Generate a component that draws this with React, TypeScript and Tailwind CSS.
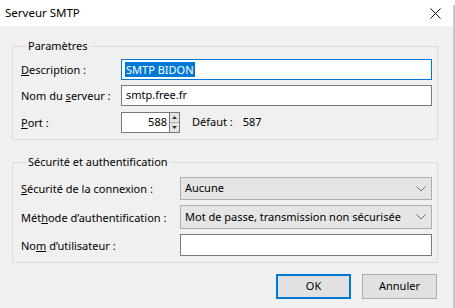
import React from 'react'

const font = { fontFamily: '"Noto Sans", "Open Sans", sans-serif' }

const Chevron = () => (
  <svg width="10" height="6" viewBox="0 0 10 6" className="shrink-0">
    <polyline points="0.5,0.5 5,5 9.5,0.5" fill="none" stroke="#6d6d6d" strokeWidth="1" />
  </svg>
)

const Label = ({ children, w }: { children: React.ReactNode; w: string }) => (
  <div className={`${w} shrink-0 whitespace-nowrap text-[11px] leading-none text-black`}>{children}</div>
)

const App = () => {
  return (
    <div className="flex w-[455px] h-[308px] bg-white" style={font}>
      <div className="flex flex-col w-[453px] h-full bg-[#f0f0f0]">
        {/* title bar */}
        <div className="flex items-center justify-between h-[26px] bg-white pl-[5px] pr-[12px]">
          <span className="text-[11.5px] text-black">Serveur SMTP</span>
          <svg width="11" height="11" viewBox="0 0 11 11">
            <path d="M0.5 0.5 L10.5 10.5 M10.5 0.5 L0.5 10.5" stroke="#111" strokeWidth="1" />
          </svg>
        </div>

        <div className="flex flex-col pl-[12px] pr-[15px] pt-[12px]">
          {/* Paramètres */}
          <fieldset className="border border-[#dcdcdc] pl-[8px] pr-[5px] pt-[5px] pb-[6px]">
            <legend className="ml-[6px] px-[1px] text-[11px] leading-[16px] text-black">Paramètres</legend>
            <div className="flex flex-col gap-[5px]">
              <div className="flex items-center">
                <Label w="w-[100px]"><u>D</u>escription :</Label>
                <div className="flex items-center flex-1 h-[21px] bg-white border border-[#0078d7] pl-[3px]">
                  <span className="bg-[#0078d7] text-white text-[11px] leading-[15px] px-[1px]">SMTP BIDON</span>
                </div>
              </div>
              <div className="flex items-center">
                <Label w="w-[100px]">Nom du <u>s</u>erveur :</Label>
                <div className="flex items-center flex-1 h-[21px] bg-white border border-[#7a7a7a] pl-[4px] text-[11px] text-black">
                  smtp.free.fr
                </div>
              </div>
              <div className="flex items-center mt-[1px]">
                <Label w="w-[100px]"><u>P</u>ort :</Label>
                <div className="flex items-center justify-end w-[48px] h-[21px] bg-white border border-[#7a7a7a] border-r-0 pr-[2px] text-[11px] text-black">
                  588
                </div>
                <div className="flex flex-col w-[11px] h-[21px] border border-[#7a7a7a] bg-white">
                  <div className="flex items-center justify-center flex-1 bg-[#e5e5e5] border-b border-[#adadad]">
                    <svg width="5" height="3" viewBox="0 0 5 3"><polygon points="0,3 2.5,0 5,3" fill="#333" /></svg>
                  </div>
                  <div className="flex items-center justify-center flex-1 bg-[#e5e5e5]">
                    <svg width="5" height="3" viewBox="0 0 5 3"><polygon points="0,0 2.5,3 5,0" fill="#333" /></svg>
                  </div>
                </div>
                <span className="ml-[12px] text-[11px] text-black">Défaut :</span>
                <span className="ml-[10px] text-[11px] text-black">587</span>
              </div>
            </div>
          </fieldset>

          {/* Sécurité */}
          <fieldset className="mt-[14px] border border-[#dcdcdc] pl-[8px] pr-[5px] pt-[7px] pb-[6px]">
            <legend className="ml-[6px] px-[1px] text-[11px] leading-[16px] text-black">Sécurité et authentification</legend>
            <div className="flex flex-col gap-[5px]">
              <div className="flex items-center">
                <Label w="w-[159px]"><u>S</u>écurité de la connexion :</Label>
                <div className="flex items-center justify-between flex-1 h-[23px] bg-[#e5e5e5] border border-[#adadad] pl-[4px] pr-[5px] text-[11px] text-black">
                  <span>Aucune</span>
                  <Chevron />
                </div>
              </div>
              <div className="flex items-center">
                <Label w="w-[159px]">Mét<u>h</u>ode d’authentification :</Label>
                <div className="flex items-center justify-between flex-1 h-[24px] bg-[#e5e5e5] border border-[#adadad] pl-[4px] pr-[5px] text-[11px] text-black">
                  <span className="whitespace-nowrap">Mot de passe, transmission non sécurisée</span>
                  <Chevron />
                </div>
              </div>
              <div className="flex items-center">
                <Label w="w-[159px]">No<u>m</u> d’utilisateur :</Label>
                <div className="flex-1 h-[22px] bg-white border border-[#7a7a7a]" />
              </div>
            </div>
          </fieldset>

          {/* buttons */}
          <div className="flex justify-end gap-[11px] mt-[11px] pr-[1px]">
            <button className="w-[75px] h-[25px] bg-[#e1e1e1] border-2 border-[#0078d7] text-[11px] text-black">OK</button>
            <button className="w-[75px] h-[25px] bg-[#e1e1e1] border border-[#adadad] text-[11px] text-black">Annuler</button>
          </div>
        </div>
      </div>
      <div className="flex flex-col w-[2px] h-full">
        <div className="h-[5px] bg-white" />
        <div className="flex-1 bg-[#c8c8c8]" />
      </div>
    </div>
  )
}

export default App
